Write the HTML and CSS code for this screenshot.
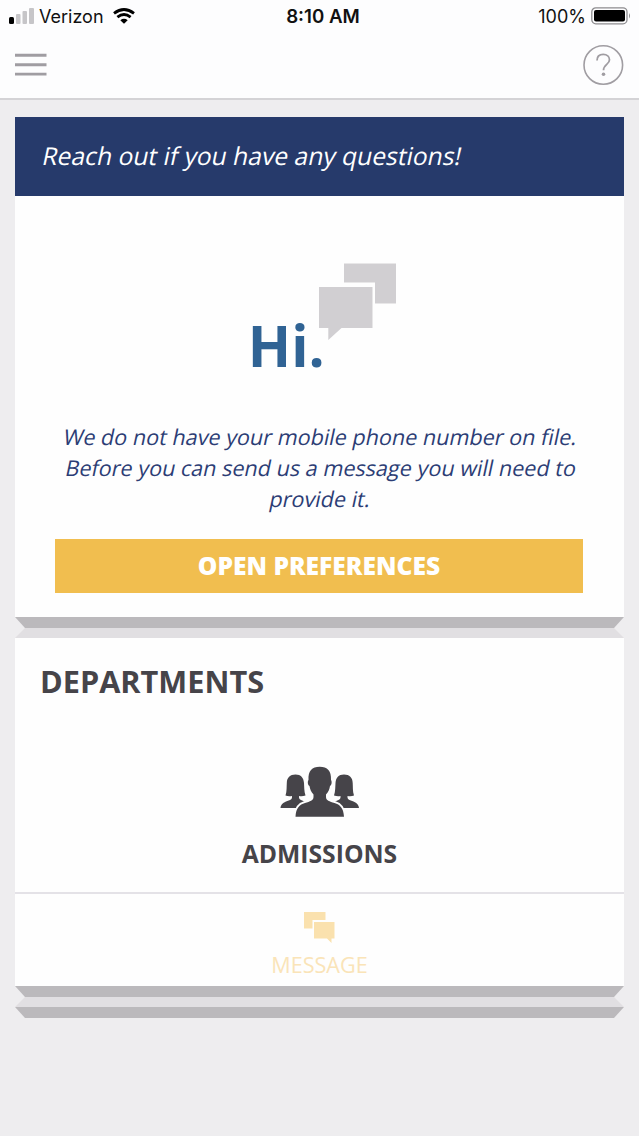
FILE: index.html
```html
<!DOCTYPE html>
<html lang="en">
<head>
<meta charset="utf-8">
<title>Messages</title>
<link rel="stylesheet" href="styles.css">
</head>
<body>
<header class="top">
  <div class="status">
    <div class="carrier">
      <svg class="signal" width="25" height="16" viewBox="0 0 25 16"><rect x="0" y="9" width="5" height="7" rx="1.5" fill="#000"/><g fill="#c6c5c8"><rect x="7" y="6" width="4.5" height="10" rx="1"/><rect x="13.5" y="3" width="4.5" height="13" rx="1"/><rect x="20" y="0" width="5" height="16" rx="1"/></g></svg>
      <span class="carrier-name">Verizon</span>
      <svg class="wifi" width="22" height="16" viewBox="0 0 22 16"><g fill="none" stroke="#000" stroke-width="2.8"><path d="M1 5.3Q11 -2.4 21 5.3"/><path d="M4.4 9.2Q11 3.8 17.6 9.2"/></g><path d="M7.3 12.2Q11 9.3 14.7 12.2L11 15.8Z"/></svg>
    </div>
    <span class="clock">8:10 AM</span>
    <div class="power">
      <span class="percent">100%</span>
      <svg class="battery" width="40" height="18" viewBox="0 0 40 18"><rect x=".8" y=".8" width="35.2" height="16" rx="4" fill="none" stroke="#8d8c8f" stroke-width="1.3"/><rect x="3" y="3" width="31" height="11.6" rx="2"/><path d="M38 6Q40 8.8 38 11.6Z" fill="#8d8c8f"/></svg>
    </div>
  </div>
  <nav class="nav">
    <svg width="32" height="24" viewBox="0 0 32 24"><path d="M0 2.3H31.5M0 11.8H31.5M0 21.1H31.5" stroke="#a09da2" stroke-width="2.9"/></svg>
    <svg width="42" height="42" viewBox="0 0 42 42"><g fill="none" stroke="#a09da2"><circle cx="21.3" cy="21" r="19.3" stroke-width="1.6"/><path d="M15 16.4C15 12.500 17.500 10.300 21.200 10.300S27.500 12.500 27.500 15.800C27.500 20.600 21.500 20.400 21.500 26.300" stroke-width="1.8"/></g><circle cx="21.500" cy="30.300" r="1.8" fill="#a09da2"/></svg>
  </nav>
</header>
<main class="content">
  <section class="card">
    <h1 class="banner"><span class="slant">Reach out if you have any questions!</span></h1>
    <div class="intro">
      <svg class="hi" width="150" height="110" viewBox="0 0 150 110"><g fill="#d1cfd2"><path d="M94 1.500H146V41.500H125V20.500H94Z"/><path d="M69 25H122.500V66H91.500L78.300 78V66H69Z"/></g><text class="hi-text" x="-2.200" y="105">Hi.</text></svg>
      <p class="notice"><span class="slant">We do not have your mobile phone number on file.</span><br><span class="slant">Before you can send us a message you will need to</span><br><span class="slant">provide it.</span></p>
      <button class="primary">OPEN PREFERENCES</button>
    </div>
  </section>
  <div class="fold"></div>
  <div class="shade"></div>
  <section class="card departments">
    <h2 class="heading">DEPARTMENTS</h2>
    <div class="department">
      <svg class="people" width="80" height="52" viewBox="0 0 80 52"><g fill="#464449"><path id="side" d="M5.500 29.500C7 25 6.500 21 6.800 17C7 11.500 10 8.500 15.500 8.500S23.500 11.500 24 17C24.300 21 24 25 25.500 29.500Q22 30.800 19 30V31.500Q19 33 21 34L30 38V42H.500C1 38 3.500 36.500 6 35.500L10 34Q12 33 12 31.500V30Q8.500 30.800 5.500 29.500Z"/><use href="#side" transform="translate(79.500 0) scale(-1 1)"/></g><path d="M15.500 50.700C16 42 19.500 38.500 25 37C30 35.500 33.500 34.500 33.500 31V28.500C31 26 30 23 29.500 20C27.500 19 27.500 15 28.500 14C28 5 32 .8 39.700 .8S51.500 5 51 14C52 15 52 19 50 20C49.500 23 48.500 26 46 28.500V31C46 34.500 49.500 35.500 54.500 37C60 38.500 63.500 42 64 50.700Z" fill="#464449" stroke="#fefefe" stroke-width="4" paint-order="stroke"/></svg>
      <h3 class="name">ADMISSIONS</h3>
    </div>
    <div class="message">
      <svg width="32" height="31" viewBox="0 0 32 31" fill="#fae1ae"><path d="M0 0H21.500V8H8.500V16.500H0Z"/><path d="M10 10H30.500V26.500H27.500V31L23 26.500H10Z"/></svg>
      <span class="message-label">MESSAGE</span>
    </div>
  </section>
  <div class="fold"></div>
  <div class="shade"></div>
  <div class="fold"></div>
</main>
</body>
</html>
```
FILE: styles.css
```css
* { box-sizing: border-box; }
body { margin: 0; min-height: 1136px; background: #eeedef; font-family: "Open Sans", sans-serif; color: #464449; }
svg { display: block; flex-shrink: 0; }
.top { height: 100px; background: #fdfdfe; border-bottom: 2px solid #d4d3d6; }
.status { height: 32px; display: grid; grid-template-columns: 1fr auto 1fr; align-items: center; padding: 0 8px 0 9px; font: 18.5px/33px Inter, sans-serif; color: #111; white-space: nowrap; }
.carrier, .power { display: flex; align-items: center; }
.signal { margin: 0 5px 2px 0; }
.wifi { margin: 0 0 2px 9px; }
.battery { margin-bottom: 2px; }
.carrier-name { font-size: 18px; }
.clock { font-weight: 600; font-size: 18.7px; margin-left: 6px; }
.power { justify-content: flex-end; gap: 5px; }
.percent { font-size: 18px; }
.nav { display: flex; justify-content: space-between; align-items: center; height: 66px; padding: 0 15px; }
.content { padding: 17px 15px 0; }
.card { background: #fefefe; }
.slant { display: inline-block; transform: skewX(-12deg); }
.banner { height: 79px; margin: 0; padding-left: 28px; background: #263a6b; color: #fff; font-size: 24.65px; line-height: 78px; font-weight: 400; white-space: nowrap; }
.intro { height: 421px; padding: 66px 40px 0; }
.hi { margin-left: 195px; overflow: visible; }
.hi-text { font-size: 56.7px; font-weight: 700; fill: #306394; }
.notice { margin: 49px 0 0; padding-left: 3px; text-align: center; color: #2c3d75; font-size: 21.6px; line-height: 31px; font-weight: 400; white-space: nowrap; }
.primary { display: block; width: 528px; height: 54px; margin: 25px 0 0; padding: 0; border: 0; background: #f1be4f; color: #fff; font: 800 24.6px/54px "Open Sans", sans-serif; }
.fold { height: 11px; background: #bbb9bc; clip-path: polygon(0 0, 100% 0, calc(100% - 10px) 100%, 10px 100%); }
.shade { height: 10px; background: #e1dfe2; clip-path: polygon(10px 0, calc(100% - 10px) 0, 100% 100%, 0 100%); }
.departments { height: 348px; }
.heading { margin: 0; padding: 22px 0 0 25px; font-size: 30.7px; line-height: 42px; font-weight: 700; }
.department { height: 190px; padding-top: 64px; display: flex; flex-direction: column; align-items: center; }
.name { margin: 19px 0 0; font-size: 24.7px; line-height: 34px; font-weight: 700; }
.message { height: 94px; border-top: 2px solid #e4e2e7; padding-top: 18px; display: flex; flex-direction: column; align-items: center; }
.message-label { margin-top: 7px; color: #fae4b8; font-size: 21.6px; font-weight: 400; line-height: 30px; }
```
